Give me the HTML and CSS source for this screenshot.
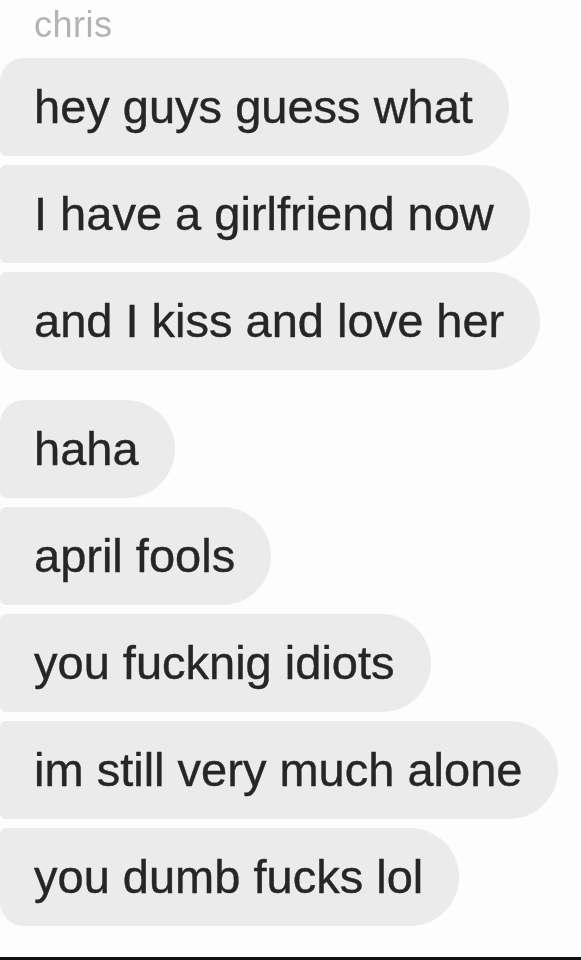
FILE: index.html
```html
<!DOCTYPE html>
<html lang="en">
<head>
<meta charset="utf-8">
<title>chris</title>
<link rel="stylesheet" href="styles.css">
</head>
<body>
<main class="screen">
  <div class="thread">
    <div class="sender">chris</div>
    <div class="group">
      <div class="bubble first">hey guys guess what</div>
      <div class="bubble">I have a girlfriend now</div>
      <div class="bubble last">and I kiss and love her</div>
    </div>
    <div class="group second">
      <div class="bubble first">haha</div>
      <div class="bubble">april fools</div>
      <div class="bubble">you fucknig idiots</div>
      <div class="bubble">im still very much alone</div>
      <div class="bubble last">you dumb fucks lol</div>
    </div>
  </div>
  <div class="edge"></div>
</main>
</body>
</html>
```

FILE: styles.css
```css
html, body {
  margin: 0;
  padding: 0;
  background: #fdfdfd;
}

.screen {
  width: 581px;
  height: 960px;
  display: flex;
  flex-direction: column;
  overflow: hidden;
  font-family: "Liberation Sans", Arial, sans-serif;
}

.thread {
  padding-top: 5px;
  display: flex;
  flex-direction: column;
  filter: blur(0.5px);
}

.sender {
  font-size: 36px;
  line-height: 40px;
  color: #b3b3b3;
  padding-left: 34px;
  letter-spacing: 0.5px;
  margin-bottom: 13px;
}

.group {
  display: flex;
  flex-direction: column;
  align-items: flex-start;
  gap: 9px;
}

.group.second {
  margin-top: 30px;
}

.bubble {
  background: #ebebeb;
  color: #262626;
  -webkit-text-stroke: 0.4px #262626;
  font-size: 47px;
  line-height: 98px;
  height: 98px;
  padding: 0 36px 0 34px;
  border-radius: 6px 49px 49px 6px;
  white-space: nowrap;
}

.bubble.first {
  border-top-left-radius: 24px;
}

.bubble.last {
  border-bottom-left-radius: 24px;
}

.edge {
  margin-top: auto;
  height: 3px;
  background: #111;
}
```
